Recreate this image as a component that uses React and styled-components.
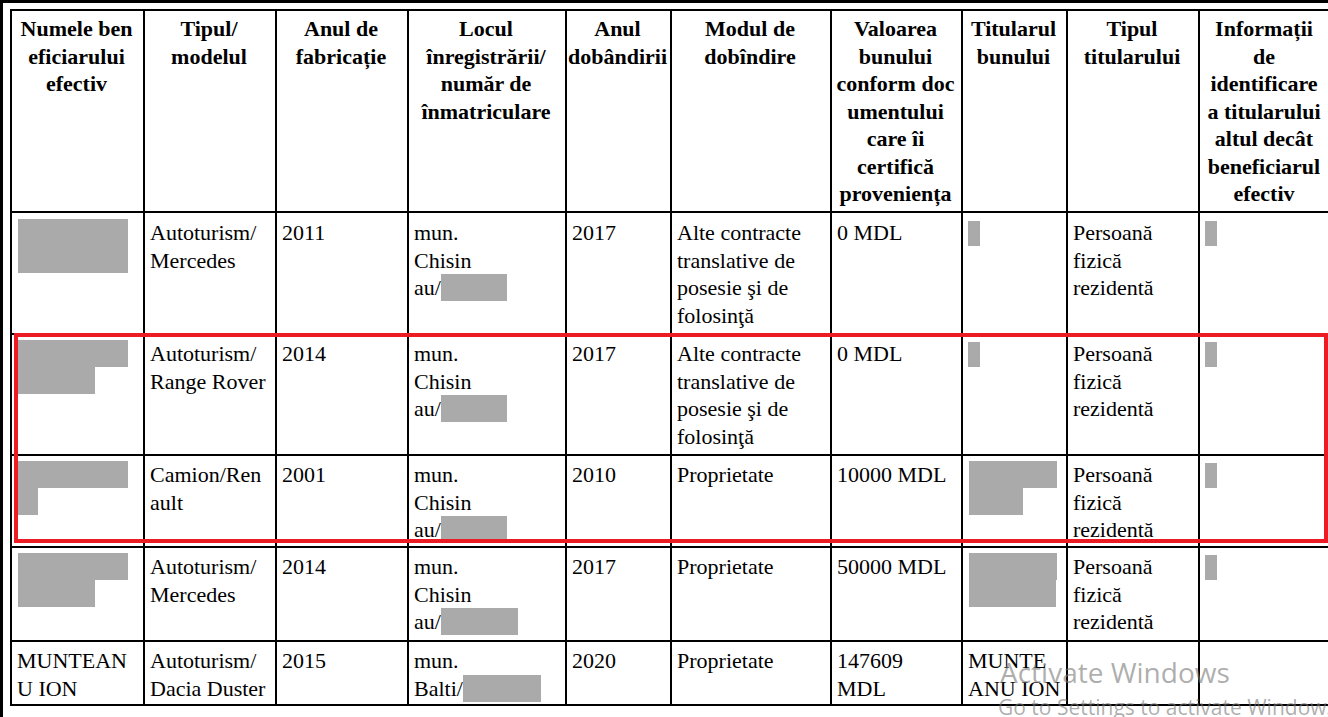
import React from 'react'
import styled, { createGlobalStyle } from 'styled-components'

const GlobalStyle = createGlobalStyle`
  html, body {
    margin: 0;
    padding: 0;
    background: #fff;
    overflow: hidden;
  }
`

const headers = [
  ['Numele ben', 'eficiarului', 'efectiv'],
  ['Tipul/', 'modelul'],
  ['Anul de', 'fabricație'],
  ['Locul', 'înregistrării/', 'număr de', 'înmatriculare'],
  ['Anul', 'dobândirii'],
  ['Modul de', 'dobîndire'],
  ['Valoarea', 'bunului', 'conform doc', 'umentului', 'care îi', 'certifică', 'proveniența'],
  ['Titularul', 'bunului'],
  ['Tipul', 'titularului'],
  ['Informații', 'de', 'identificare', 'a titularului', 'altul decât', 'beneficiarul', 'efectiv'],
]

export default function App() {
  const persoana = <Lines lines={['Persoană', 'fizică', 'rezidentă']} />
  const contract = <Lines lines={['Alte contracte', 'translative de', 'posesie şi de', 'folosinţă']} />
  const chisinau = (w) => (
    <>
      mun.<br />Chisin<br />au/<Redact $w={w} />
    </>
  )
  const small = <Redact $w={12} $h={25} $top={2} />

  const rows = [
    [
      <RedactBlock><Redact $w={110} $h={54} /></RedactBlock>,
      <Lines lines={['Autoturism/', 'Mercedes']} />,
      '2011',
      chisinau(66),
      '2017',
      contract,
      '0 MDL',
      small,
      persoana,
      small,
    ],
    [
      <RedactBlock><Redact $w={110} /><Redact $w={77} /></RedactBlock>,
      <Lines lines={['Autoturism/', 'Range Rover']} />,
      '2014',
      chisinau(66),
      '2017',
      contract,
      '0 MDL',
      small,
      persoana,
      small,
    ],
    [
      <RedactBlock><Redact $w={110} /><Redact $w={20} /></RedactBlock>,
      <Lines lines={['Camion/Ren', 'ault']} />,
      '2001',
      chisinau(66),
      '2010',
      'Proprietate',
      '10000 MDL',
      <RedactBlock><Redact $w={88} /><Redact $w={54} /></RedactBlock>,
      persoana,
      small,
    ],
    [
      <RedactBlock><Redact $w={110} /><Redact $w={77} /></RedactBlock>,
      <Lines lines={['Autoturism/', 'Mercedes']} />,
      '2014',
      chisinau(77),
      '2017',
      'Proprietate',
      '50000 MDL',
      <RedactBlock><Redact $w={88} /><Redact $w={87} /></RedactBlock>,
      persoana,
      small,
    ],
    [
      <Lines lines={['MUNTEAN', 'U ION']} />,
      <Lines lines={['Autoturism/', 'Dacia Duster']} />,
      '2015',
      <>mun.<br />Balti/<Redact $w={78} /></>,
      '2020',
      'Proprietate',
      <Lines lines={['147609', 'MDL']} />,
      <Lines lines={['MUNTE', 'ANU ION']} />,
      '',
      '',
    ],
  ]

  return (
    <Page>
      <GlobalStyle />
      <Frame>
        <Grid>
          {headers.map((h, i) => (
            <HeadCell key={'h' + i}>
              <Lines lines={h} />
            </HeadCell>
          ))}
          {rows.map((row, r) =>
            row.map((cell, c) => (
              <Cell key={r + '-' + c} $first={r === 0}>
                {cell}
              </Cell>
            ))
          )}
        </Grid>
      </Frame>
      <Highlight />
      <Watermark>
        <WatermarkTitle>Activate Windows</WatermarkTitle>
        <WatermarkSub>Go to Settings to activate Windows.</WatermarkSub>
      </Watermark>
    </Page>
  )
}

function Lines({ lines }) {
  return lines.map((l, i) => (
    <React.Fragment key={i}>
      {i > 0 && <br />}
      {l}
    </React.Fragment>
  ))
}

const Page = styled.div`
  position: relative;
  width: 1328px;
  height: 717px;
  overflow: hidden;
  font-family: "Liberation Serif", "Times New Roman", serif;
  color: #000;
`

const Frame = styled.div`
  border-top: 3px solid #000;
  border-left: 3px solid #000;
  padding: 6px 0 0 7px;
  height: 100%;
  box-sizing: border-box;
`

const Grid = styled.div`
  display: grid;
  grid-template-columns: 133px 132px 132px 158px 105px 160px 131px 105px 132px 132px;
  grid-template-rows: 202px 122px 121px 92px 94px 64px;
  width: max-content;
  border-top: 2px solid #000;
  border-left: 2px solid #000;
`

const BaseCell = styled.div`
  box-sizing: border-box;
  border-right: 2px solid #000;
  border-bottom: 2px solid #000;
  font-size: 22px;
  line-height: 27.5px;
  white-space: nowrap;
  overflow: hidden;
`

const HeadCell = styled(BaseCell)`
  font-weight: bold;
  text-align: center;
  padding: 4px 2px 0 0;
`

const Cell = styled(BaseCell)`
  padding: ${p => (p.$first ? '6px' : '5px')} 4px 0 5px;
`

const RedactBlock = styled.div`
  display: flex;
  flex-direction: column;
  align-items: flex-start;
  margin-left: 1px;
`

const Redact = styled.span`
  display: inline-block;
  vertical-align: top;
  width: ${p => p.$w}px;
  height: ${p => p.$h || 27}px;
  margin-top: ${p => p.$top || 0}px;
  background: #aaaaaa;
`

const Highlight = styled.div`
  position: absolute;
  left: 14px;
  top: 333px;
  width: 1314px;
  height: 210px;
  box-sizing: border-box;
  border: 4px solid #ec1c24;
  pointer-events: none;
`

const Watermark = styled.div`
  position: absolute;
  left: 998px;
  top: 654px;
  font-family: "Open Sans", "Noto Sans", sans-serif;
  color: rgba(120, 120, 120, 0.6);
  white-space: nowrap;
  pointer-events: none;
`

const WatermarkTitle = styled.div`
  font-size: 28px;
  line-height: 36px;
  padding-left: 2px;
`

const WatermarkSub = styled.div`
  font-size: 21px;
  line-height: 28px;
  margin-top: 3px;
`
